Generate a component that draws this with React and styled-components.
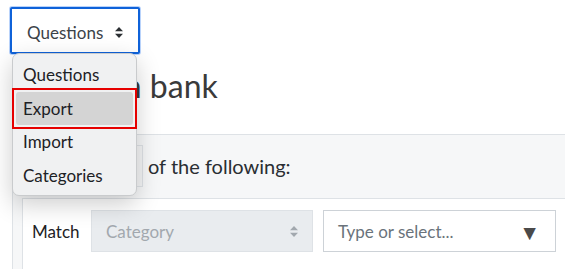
import React from 'react';
import styled, { createGlobalStyle } from 'styled-components';

const Global = createGlobalStyle`
  html, body {
    margin: 0;
    padding: 0;
    background: #fff;
    overflow: hidden;
  }
  body {
    font-family: 'Lato', 'Open Sans', sans-serif;
    color: #1d2125;
  }
`;

const Page = styled.div`
  width: 565px;
  height: 269px;
  padding-top: 7px;
  box-sizing: border-box;
  position: relative;
  overflow: hidden;
`;

const Picker = styled.div`
  position: relative;
  margin-left: 10px;
  width: 130px;
`;

const SelectButton = styled.button`
  display: flex;
  align-items: center;
  justify-content: space-between;
  width: 130px;
  height: 47px;
  box-sizing: border-box;
  padding: 3px 15px 0 15px;
  background: #fff;
  border: 2px solid #0f62d9;
  border-radius: 2px;
  box-shadow: 0 0 0 1px #b9d3fb;
  font-family: inherit;
  font-size: 17px;
  color: #3c4349;
  cursor: pointer;
`;

const SortIcon = ({ color = '#2b2f33' }) => (
  <svg width="8" height="11" viewBox="0 0 8 11">
    <path d="M4 0 L8 4.3 L0 4.3 Z" fill={color} />
    <path d="M4 11 L8 6.7 L0 6.7 Z" fill={color} />
  </svg>
);

const Menu = styled.ul`
  position: absolute;
  top: 46px;
  left: 2px;
  width: 125px;
  box-sizing: border-box;
  margin: 0;
  padding: 4px 3px 3px;
  list-style: none;
  background: #f0f1f2;
  border: 1px solid #c9cbcd;
  border-radius: 7px;
  box-shadow: 0 8px 24px rgba(0, 0, 0, 0.2);
  z-index: 5;
`;

const MenuItem = styled.li`
  position: relative;
  display: flex;
  align-items: center;
  height: 33.5px;
  padding: 0 7px;
  font-size: 17px;
  color: #1d2125;
  border-radius: 3px;
  background: ${p => (p.$active ? '#d4d4d4' : 'transparent')};

  &::after {
    content: '';
    display: ${p => (p.$active ? 'block' : 'none')};
    position: absolute;
    top: -4px;
    bottom: -4px;
    left: -4px;
    right: -4px;
    border: 2px solid #e60000;
  }
`;

const Heading = styled.h2`
  margin: 13px 0 0 12px;
  height: 67px;
  font-size: 32px;
  font-weight: 400;
  line-height: 38px;
  color: #3a3a3a;
`;

const Outer = styled.div`
  margin-left: 12px;
  border-left: 1px solid #dee2e6;
  border-top: 1px solid #dee2e6;
  background: #f6f7f8;
  padding-left: 9px;
  height: 140px;
`;

const HeaderRow = styled.div`
  display: flex;
  align-items: center;
  height: 63px;
  padding-left: 19px;
  margin-left: -9px;
  padding-bottom: 2px;
  box-sizing: border-box;
  font-size: 20px;
  color: #2a2e33;
`;

const Label = styled.span`
  width: 59px;
  flex-shrink: 0;
  font-size: 17px;
  color: #1d2125;
`;

const SmallSelect = styled.div`
  display: flex;
  align-items: center;
  width: 52px;
  height: 42px;
  flex-shrink: 0;
  box-sizing: border-box;
  padding-left: 10px;
  border: 1px solid #dee2e6;
  background: #f4f5f6;
  margin-right: 5px;
  font-size: 17px;
`;

const Inner = styled.div`
  background: #fff;
  border-left: 1px solid #dee2e6;
  border-top: 1px solid #dee2e6;
  height: 100%;
  padding: 11px 0 0 9px;
  box-sizing: border-box;
`;

const FilterRow = styled.div`
  display: flex;
  align-items: center;
`;

const Select = styled.div`
  display: flex;
  align-items: center;
  justify-content: space-between;
  flex-shrink: 0;
  box-sizing: border-box;
  width: ${p => p.$w}px;
  height: 42px;
  padding: 0 ${p => (p.$disabled ? 14 : 15)}px 0 14px;
  margin-right: 10px;
  font-size: 17px;
  border: 1px solid ${p => (p.$disabled ? '#dee2e6' : '#cdd2d7')};
  background: ${p => (p.$disabled ? '#e9ecef' : '#fff')};
  color: ${p => (p.$disabled ? '#a2a8ae' : '#6a737b')};
`;

const Caret = styled.span`
  font-size: 21px;
  color: #4a4a4a;
  line-height: 1;
`;

export default function App() {
  return (
    <Page>
      <Global />
      <Picker>
        <SelectButton>
          Questions
          <SortIcon />
        </SelectButton>
        <Menu>
          <MenuItem>Questions</MenuItem>
          <MenuItem $active>Export</MenuItem>
          <MenuItem>Import</MenuItem>
          <MenuItem>Categories</MenuItem>
        </Menu>
      </Picker>
      <Heading>Question bank</Heading>
      <Outer>
        <HeaderRow>
          <Label>Match</Label>
          <SmallSelect>All</SmallSelect>
          of the following:
        </HeaderRow>
        <Inner>
          <FilterRow>
            <Label>Match</Label>
            <Select $w={222} $disabled>
              Category
              <SortIcon color="#a2a8ae" />
            </Select>
            <Select $w={233}>
              Type or select...
              <Caret>▼</Caret>
            </Select>
          </FilterRow>
        </Inner>
      </Outer>
    </Page>
  );
}
